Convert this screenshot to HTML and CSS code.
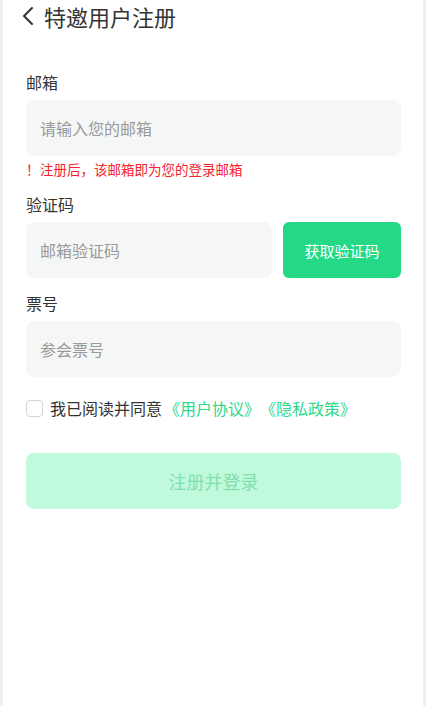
FILE: index.html
```html
<!DOCTYPE html>
<html lang="zh-CN">
<head>
    <meta charset="UTF-8">
    <meta name="viewport" content="width=device-width, initial-scale=1.0">
    <title>特邀用户注册</title>
    <link rel="stylesheet" href="styles.css">
</head>
<body>
    <div class="page">
        <div class="header">
            <span class="back">
                <svg width="12" height="20" viewBox="0 0 12 20"><path d="M10 2 L2 10 L10 18" fill="none" stroke="#333" stroke-width="2" stroke-linecap="round" stroke-linejoin="round"/></svg>
            </span>
            <h1>特邀用户注册</h1>
        </div>

        <div class="form">
            <div class="field">
                <label>邮箱</label>
                <input type="text" class="input" placeholder="请输入您的邮箱">
                <p class="tip"><span class="mark">！</span>注册后，该邮箱即为您的登录邮箱</p>
            </div>

            <div class="field">
                <label>验证码</label>
                <div class="code-row">
                    <input type="text" class="input" placeholder="邮箱验证码">
                    <button class="code-btn">获取验证码</button>
                </div>
            </div>

            <div class="field">
                <label>票号</label>
                <input type="text" class="input" placeholder="参会票号">
            </div>

            <div class="agree">
                <span class="check"></span>
                <span>我已阅读并同意</span>
                <a href="#">《用户协议》</a><a href="#">《隐私政策》</a>
            </div>

            <button class="submit">注册并登录</button>
        </div>
    </div>
</body>
</html>
```

FILE: styles.css
```css
* {
    box-sizing: border-box;
}
body {
    margin: 0;
    padding: 0 3px;
    background-color: #efefef;
    font-family: "Noto Sans CJK SC", "Noto Sans", sans-serif;
    color: #333;
}
.page {
    background-color: #fff;
    min-height: 706px;
}
.header {
    display: flex;
    align-items: center;
    height: 32px;
    padding-left: 19px;
}
.back {
    display: flex;
    width: 22px;
}
.header h1 {
    margin: 0;
    font-size: 22px;
    font-weight: 400;
    color: #333;
    line-height: 32px;
}
.form {
    padding: 38px 22px 0 23px;
}
.field {
    margin-bottom: 13px;
}
.field label {
    display: block;
    font-size: 16px;
    line-height: 24px;
    margin-bottom: 6px;
}
.input {
    display: block;
    width: 100%;
    height: 56px;
    border: none;
    outline: none;
    border-radius: 8px;
    background-color: #f5f7f6;
    padding: 0 14px;
    font-family: inherit;
    font-size: 16px;
    color: #333;
}
.input::placeholder {
    color: #999;
}
.tip {
    margin: 3px 0 0;
    font-size: 13.5px;
    line-height: 20px;
    color: #f5242e;
}
.tip .mark {
    display: inline-block;
    width: 14px;
}
.code-row {
    display: flex;
    gap: 11px;
}
.code-row .input {
    flex: 1;
}
.code-btn {
    width: 118px;
    height: 56px;
    border: none;
    border-radius: 6px;
    background-color: #23d986;
    color: #fff;
    font-family: inherit;
    font-size: 15px;
}
.agree {
    display: flex;
    align-items: center;
    margin-top: 19px;
    font-size: 16px;
    line-height: 24px;
}
.check {
    width: 17px;
    height: 17px;
    border: 1px solid #d6d6d6;
    border-radius: 4px;
    margin-right: 7px;
}
.agree a {
    color: #2fd98b;
    text-decoration: none;
}
.agree a:first-of-type {
    margin-left: 2px;
}
.submit {
    display: block;
    width: 100%;
    height: 56px;
    margin-top: 33px;
    border: none;
    border-radius: 8px;
    background-color: #c1f9dd;
    color: #82dfae;
    font-family: inherit;
    font-size: 18px;
}
```
